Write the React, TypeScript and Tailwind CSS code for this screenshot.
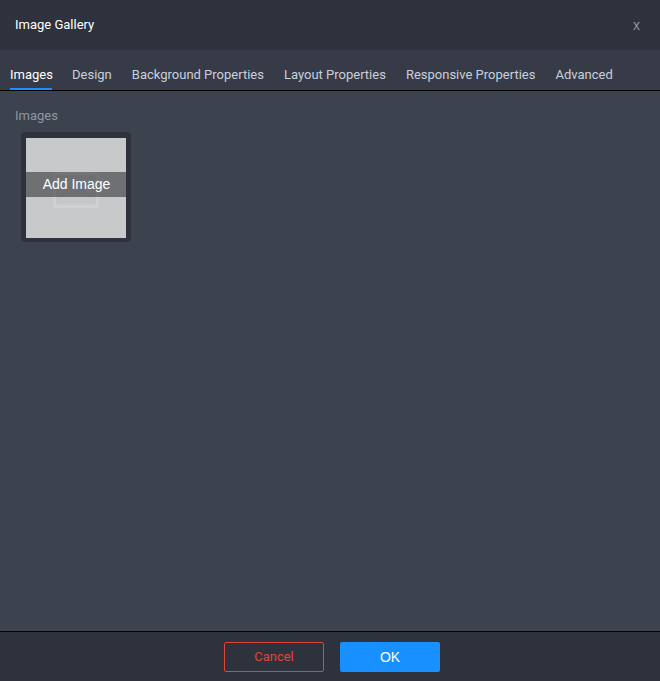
const tabs = ['Images', 'Design', 'Background Properties', 'Layout Properties', 'Responsive Properties', 'Advanced'];

const App = () => {
  return (
    <div className="flex h-[681px] w-[660px] flex-col overflow-hidden bg-[#3c424e] font-['Roboto',sans-serif] text-[13px]">
      <div className="flex h-[50px] shrink-0 items-center justify-between bg-[#2e323c] pl-[15px] pr-[20px]">
        <span className="text-[13px] text-white">Image Gallery</span>
        <span className="font-['Liberation_Sans',sans-serif] text-[14px] text-[#8f949e]">x</span>
      </div>
      <div className="flex h-[41px] shrink-0 gap-[20px] border-b border-black bg-[#363b47] pl-[10px]">
        {tabs.map((tab, i) => (
          <div
            key={tab}
            className={
              i === 0
                ? 'flex h-[40px] w-[42px] items-center border-b-2 border-[#1890ff] pt-[12px] text-white'
                : 'flex h-[40px] items-center pt-[12px] pb-[2px] text-[#c9d0dc]'
            }
          >
            {tab}
          </div>
        ))}
      </div>
      <div className="flex-1 pl-[15px] pt-[15px]">
        <div className="text-[#8f96a3]">Images</div>
        <div className="ml-[6px] mt-[6px] h-[110px] w-[110px] rounded-[4px] bg-[#2e323c] p-[5px] pt-[6px]">
          <div className="relative h-[100px] w-[100px] bg-[#c8c9cb]">
            <svg className="absolute left-[27px] top-[34px]" width="46" height="36" viewBox="0 0 46 36" fill="none">
              <rect x="1.5" y="1.5" width="43" height="33" rx="2" stroke="#d0d1d3" strokeWidth="3" />
              <rect x="5" y="5" width="36" height="25" stroke="#c0c1c3" strokeWidth="1" />
              <path d="M7 26l10-11 6 6 5-3 11 8" stroke="#c0c1c3" strokeWidth="2" />
            </svg>
            <div className="absolute inset-x-0 top-[34px] flex h-[25px] items-center justify-center bg-[#33363b]/60 pl-[1px] font-['Liberation_Sans',sans-serif] text-[14px] text-white">
              Add Image
            </div>
          </div>
        </div>
      </div>
      <div className="flex h-[50px] shrink-0 justify-center gap-[16px] border-t border-black bg-[#2e323c] pl-[4px] pt-[10px]">
        <button className="h-[30px] w-[100px] rounded-[2px] border border-[#e0443a] text-[#e0443a]">Cancel</button>
        <button className="h-[30px] w-[100px] rounded-[2px] bg-[#1890ff] font-['Liberation_Sans',sans-serif] text-[14px] text-white">OK</button>
      </div>
    </div>
  );
};

export default App;
